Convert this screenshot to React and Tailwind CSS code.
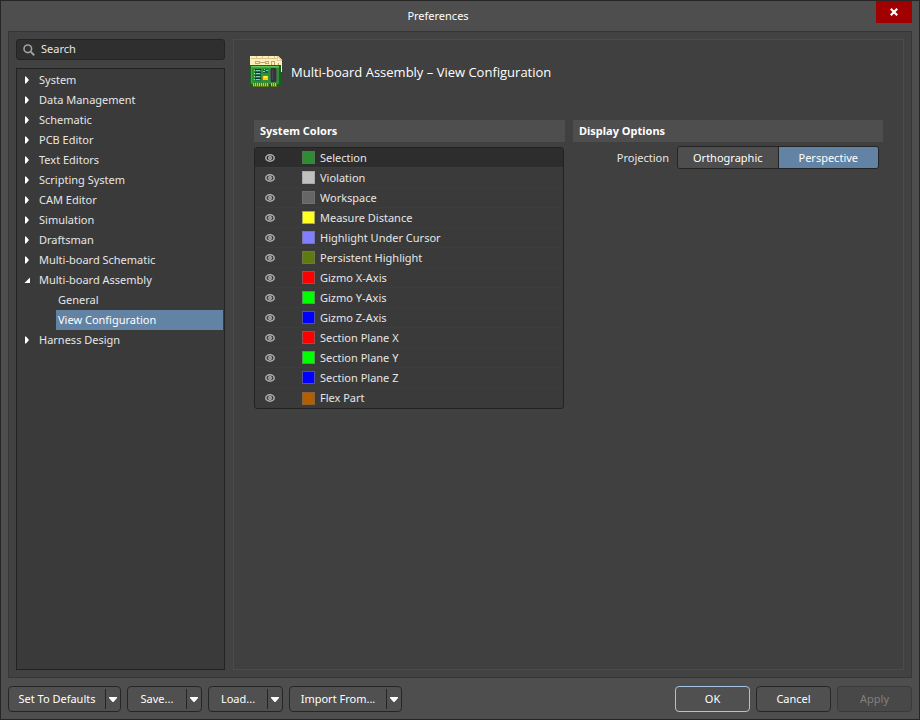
import React, { useState } from "react";

const TREE = [
  { label: "System" },
  { label: "Data Management" },
  { label: "Schematic" },
  { label: "PCB Editor" },
  { label: "Text Editors" },
  { label: "Scripting System" },
  { label: "CAM Editor" },
  { label: "Simulation" },
  { label: "Draftsman" },
  { label: "Multi-board Schematic" },
  { label: "Multi-board Assembly", children: ["General", "View Configuration"] },
  { label: "Harness Design" },
];

const COLORS = [
  { name: "Selection", swatch: "bg-[#2f8c32] border-[#4c7a50]" },
  { name: "Violation", swatch: "bg-[#c0c0c0] border-[#a8a8a8]" },
  { name: "Workspace", swatch: "bg-[#666666] border-[#707070]" },
  { name: "Measure Distance", swatch: "bg-[#ffff26] border-[#a8a850]" },
  { name: "Highlight Under Cursor", swatch: "bg-[#8080ff] border-[#7474b8]" },
  { name: "Persistent Highlight", swatch: "bg-[#5f7a10] border-[#6c7a40]" },
  { name: "Gizmo X-Axis", swatch: "bg-[#ff0000] border-[#a04a4a]" },
  { name: "Gizmo Y-Axis", swatch: "bg-[#00ff00] border-[#4aa04a]" },
  { name: "Gizmo Z-Axis", swatch: "bg-[#0000ff] border-[#5050a8]" },
  { name: "Section Plane X", swatch: "bg-[#ff0000] border-[#a04a4a]" },
  { name: "Section Plane Y", swatch: "bg-[#00ff00] border-[#4aa04a]" },
  { name: "Section Plane Z", swatch: "bg-[#0000ff] border-[#5050a8]" },
  { name: "Flex Part", swatch: "bg-[#b35f00] border-[#8a6238]" },
];

function Arrow({ open }) {
  return (
    <svg viewBox="0 0 6 8" className="h-2 w-1.5 shrink-0 fill-white" aria-hidden="true">
      {open ? <path d="M6 1.5V7H0.5Z" /> : <path d="M1 0.5H2L5 4L2 7.5H1Z" />}
    </svg>
  );
}

function Eye() {
  return (
    <svg viewBox="0 0 10 8" className="h-2 w-2.5" aria-hidden="true">
      <ellipse cx="5" cy="4" rx="4.2" ry="3.2" fill="none" stroke="#b0b0b0" strokeWidth="1.5" />
      <circle cx="5" cy="4" r="1.4" fill="#6a6a6a" stroke="#b8b8b8" strokeWidth="1.1" />
    </svg>
  );
}

function BoardIcon() {
  return (
    <svg viewBox="0 0 32 32" className="size-8 shrink-0" shapeRendering="crispEdges" aria-hidden="true">
      <path d="M0 0H28L32 4V16H30V10H0Z" fill="#fbefc0" />
      <path d="M27 0H28L32 4V5H27Z" fill="#e4cc94" />
      <path d="M28 2V4H30Z" fill="#fff8dc" />
      <path d="M1 2.500H27M6.500 0V2M12.500 0V2M18.500 0V2M24.500 0V2" stroke="#dcc48e" fill="none" />
      <path d="M5.500 5.500H9.500V7.500H5.500ZM9.500 6.500H15.500M15.500 5.500H18.500V7.500H15.500ZM21.500 9V5.500H24.500V9M28.500 7V10" stroke="#c8a468" fill="none" />
      <path d="M0 9H31V29H28V31H21V29H19V31H2V29H0Z" fill="#14641c" />
      <path d="M1 10H29V28H1Z" fill="#2f8f36" />
      <path d="M1 10H29V11H1Z" fill="#62c850" />
      <path d="M1 11H29V12H1ZM1 12H2V27H1Z" fill="#46aa42" />
      <path d="M5 13H11V25H5Z" fill="#1f7840" />
      <path d="M5 13H11V14H5ZM5 16H11V17H5ZM5 19H11V20H5ZM5 22H11V23H5Z" fill="#0b3830" />
      <path d="M6 14H10V15H6ZM6 17H10V18H6ZM6 20H10V21H6ZM6 23H10V24H6Z" fill="#7cd0c0" />
      <path d="M4 14H5V15H4ZM4 17H5V18H4ZM4 20H5V21H4ZM4 23H5V24H4Z" fill="#b4d890" />
      <path d="M13 13H18V17H13Z" fill="#14604e" />
      <path d="M13 15H15V16H13ZM14 13H15V14H14ZM16 14H18V15H16Z" fill="#78d4cc" />
      <path d="M12 19H18V24H12Z" fill="#908408" />
      <path d="M13 20H18V24H13Z" fill="#f4d800" />
      <path d="M14 20H17V22H14Z" fill="#fff038" />
      <path d="M20 13H27V25H20Z" fill="#4a5a4c" />
      <path d="M21 12H26V26H21Z" fill="#32363a" />
      <path d="M22 14H23V24H22Z" fill="#464a50" />
      <path d="M3 27H19V31H3ZM21 27H27V31H21Z" fill="#5a7c14" />
      <path d="M3 28.500H19M21 28.500H27" stroke="#c4cc48" strokeWidth="3" strokeDasharray="1 1" />
    </svg>
  );
}

function SplitButton({ label, width }) {
  return (
    <div className={`flex h-[26px] rounded-[4px] border border-[#262626] bg-[#505050] ${width}`}>
      <button type="button" className="flex-1 text-center">
        {label}
      </button>
      <button
        type="button"
        aria-label={`${label} options`}
        className="my-0.5 flex w-[15px] items-center justify-center border-l border-[#262626]"
      >
        <svg viewBox="0 0 8 5" className="h-[5px] w-2 fill-white" aria-hidden="true">
          <path d="M0 0H8V1L4.500 5H3.500L0 1Z" />
        </svg>
      </button>
    </div>
  );
}

function SectionTitle({ children }) {
  return <h2 className="h-[22px] bg-[#4e4e4e] px-1.5 font-bold leading-[22px] text-white">{children}</h2>;
}

export default function App() {
  const [projection, setProjection] = useState("Perspective");
  const [page, setPage] = useState("View Configuration");

  return (
    <div className="flex min-h-screen flex-col border border-[#262626] bg-[#4e4e4e] px-[7px] pb-[7px] font-['Noto_Sans',sans-serif] text-[11px] leading-5 text-[#e6e6e6]">
      <header className="flex h-[30px] items-start">
        <h1 className="flex-1 pr-2 text-center leading-[30px] text-white">Preferences</h1>
        <button type="button" aria-label="Close" className="flex h-[22px] w-9 items-center justify-center bg-[#a00000]">
          <svg viewBox="0 0 8 8" className="size-2" aria-hidden="true">
            <path d="M0.800 0.800L7.200 7.200M7.200 0.800L0.800 7.200" stroke="#fff" strokeWidth="2.200" />
          </svg>
        </button>
      </header>

      <div className="flex flex-1 gap-2 border border-[#363636] bg-[#424242] p-[7px]">
        <aside className="flex w-[209px] shrink-0 flex-col gap-2">
          <div className="flex h-[21px] items-center gap-1.5 rounded-[3px] border border-[#242424] bg-[#2f2f2f] px-1.5">
            <svg viewBox="0 0 12 12" className="size-3 shrink-0" aria-hidden="true">
              <circle cx="4.800" cy="4.800" r="3.800" fill="none" stroke="#a0a0a0" strokeWidth="1.600" />
              <path d="M7.600 7.600L11.200 11.200" stroke="#a0a0a0" strokeWidth="2" />
            </svg>
            <input
              type="text"
              aria-label="Search"
              placeholder="Search"
              className="h-[19px] w-full min-w-0 bg-transparent pb-0.5 outline-none placeholder:text-[#e6e6e6] placeholder:opacity-100"
            />
          </div>
          <ul className="flex-1 border border-[#222222] bg-[#3a3a3a] py-px pr-px">
            {TREE.map(({ label, children }) => (
              <li key={label}>
                <button type="button" className="flex h-5 w-full items-center gap-[9px] pl-[7px] text-left">
                  <Arrow open={Boolean(children)} />
                  {label}
                </button>
                {children && (
                  <ul className="pl-[39px]">
                    {children.map((child) => (
                      <li key={child}>
                        <button
                          type="button"
                          onClick={() => setPage(child)}
                          className={`block h-5 w-full pl-0.5 text-left ${page === child ? "bg-[#6283a4] text-white" : ""}`}
                        >
                          {child}
                        </button>
                      </li>
                    ))}
                  </ul>
                )}
              </li>
            ))}
          </ul>
        </aside>

        <main className="flex-1 border border-[#4c4c4c] bg-[#404040] px-4 pt-4">
          <div className="flex items-center gap-[9px]">
            <BoardIcon />
            <h2 className="font-['Open_Sans','Noto_Sans',sans-serif] text-[13px] text-white">
              Multi-board Assembly – View Configuration
            </h2>
          </div>

          <div className="mt-8 grid grid-cols-2 gap-2 pl-1 pr-[3px]">
            <section>
              <SectionTitle>System Colors</SectionTitle>
              <ul className="mt-[5px] mr-px rounded-[3px] border border-[#222222] bg-[#3a3a3a]">
                {COLORS.map(({ name, swatch }, i) => (
                  <li
                    key={name}
                    className={`flex h-5 items-center border-b border-[#3d3d3d] pl-2.5 last:border-b-0 ${i === 0 ? "bg-[#2d2d2d]" : ""}`}
                  >
                    <button type="button" aria-label={`Toggle ${name}`} className="flex">
                      <Eye />
                    </button>
                    <span className={`ml-[27px] mr-[5px] size-[13px] border ${swatch}`} />
                    {name}
                  </li>
                ))}
              </ul>
            </section>

            <section className="mr-px">
              <SectionTitle>Display Options</SectionTitle>
              <div className="mt-1 flex items-center justify-end gap-2 pr-1">
                <span id="projection-label">Projection</span>
                <div
                  role="group"
                  aria-labelledby="projection-label"
                  className="flex h-[23px] w-[202px] overflow-hidden rounded-[3px] border border-[#242424]"
                >
                  {["Orthographic", "Perspective"].map((mode) => (
                    <button
                      key={mode}
                      type="button"
                      aria-pressed={projection === mode}
                      onClick={() => setProjection(mode)}
                      className={`flex-1 border-[#242424] text-white not-first:border-l ${
                        projection === mode ? "bg-[#6283a4]" : "bg-[#4e4e4e]"
                      }`}
                    >
                      {mode}
                    </button>
                  ))}
                </div>
              </div>
            </section>
          </div>
        </main>
      </div>

      <footer className="mt-2 flex gap-1.5 text-white">
        <SplitButton label="Set To Defaults" width="w-[113px]" />
        <SplitButton label="Save..." width="w-[75px]" />
        <SplitButton label="Load..." width="w-[75px]" />
        <SplitButton label="Import From..." width="w-[113px]" />
        <button type="button" className="ml-auto h-[26px] w-[75px] rounded-[4px] border border-[#a4c4e4] bg-[#505050]">
          OK
        </button>
        <button type="button" className="h-[26px] w-[75px] rounded-[4px] border border-[#262626] bg-[#505050]">
          Cancel
        </button>
        <button
          type="button"
          disabled
          className="h-[26px] w-[75px] rounded-[4px] border border-[#3a3a3a] bg-[#484848] text-[#808080]"
        >
          Apply
        </button>
      </footer>
    </div>
  );
}
